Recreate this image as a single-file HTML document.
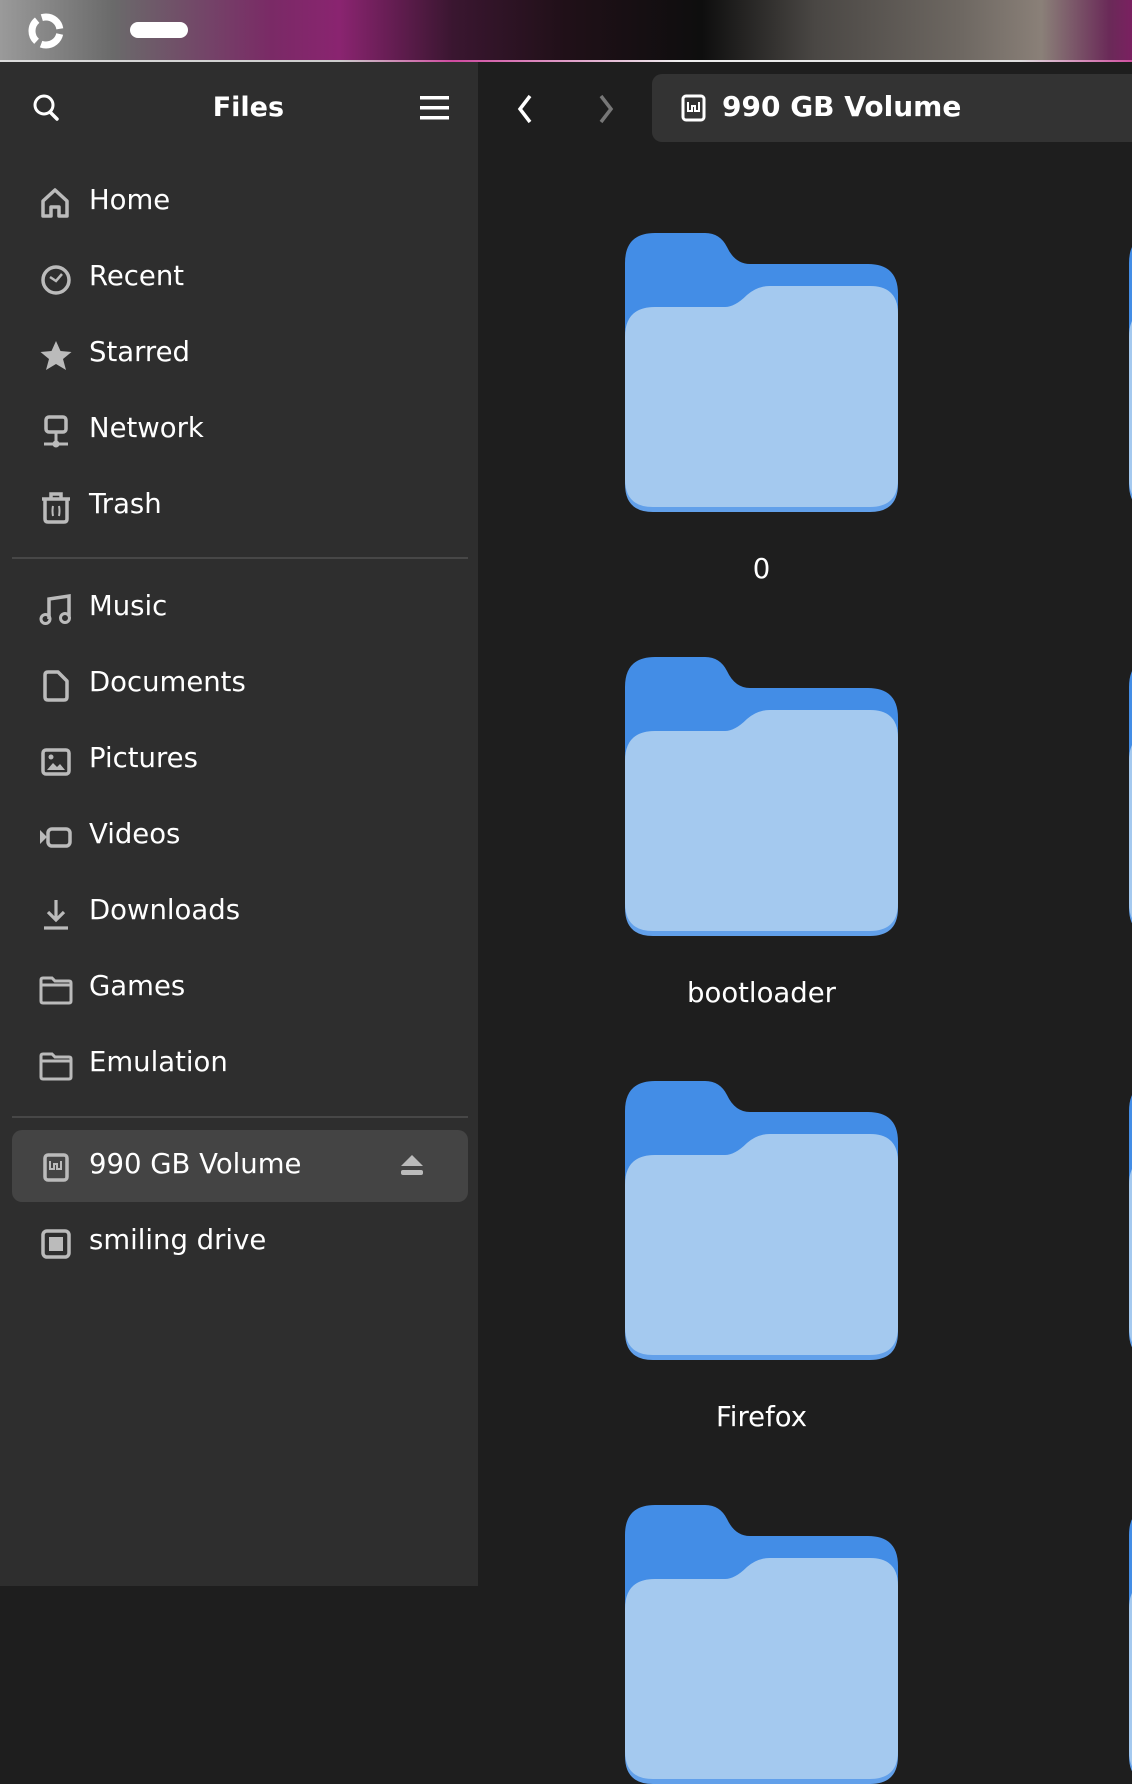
<!DOCTYPE html>
<html><head><meta charset="utf-8"><style>
*{margin:0;padding:0;box-sizing:border-box}
body{width:1132px;height:1586px;overflow:hidden;background:#1e1e1e;font-family:"DejaVu Sans","Liberation Sans",sans-serif;color:#fff;position:relative}
.top{position:absolute;left:0;top:0;width:1132px;height:61px;background:linear-gradient(90deg,#9a9a9a 0%,#6a6a6a 10%,#7a2a66 24%,#8a2470 30%,#3a1630 40%,#201018 50%,#0e0e0e 62%,#4a4744 72%,#6e6862 85%,#8a8078 92%,#6a2a58 98%,#7a2060 100%)}
.topline{position:absolute;left:0;top:60px;width:1132px;height:2px;background:linear-gradient(90deg,#ddd,#ccc 30%,#d04aa0 40%,#eee 60%,#ddd 90%,#d050a0)}
.side{position:absolute;left:0;top:62px;width:478px;height:1524px;background:#2e2e2e}
.item{position:absolute;left:0;width:478px;height:40px;display:flex;align-items:center}
.item svg{position:absolute;left:38px;top:4px}
.item span{position:absolute;left:89px;font-size:27.5px;line-height:40px;top:-2px}
.sep{position:absolute;left:12px;width:456px;height:2px;background:#474747}
.sel{position:absolute;left:12px;top:1130px;width:456px;height:72px;background:#444;border-radius:10px}
.lbl{position:absolute;width:273px;left:625px;text-align:center;font-size:27.5px}
</style></head><body>
<div class="top"></div><div class="topline"></div>
<svg style="position:absolute;left:25px;top:10px" width="42" height="42" viewBox="0 0 42 42"><circle cx="21" cy="21" r="14" fill="none" stroke="#fff" stroke-width="7" stroke-dasharray="24 5.3" stroke-dashoffset="-3"/></svg>
<div style="position:absolute;left:130px;top:22px;width:58px;height:16px;background:#fff;border-radius:8px"></div>
<div class="side"></div>
<svg style="position:absolute;left:30px;top:91px" width="32" height="32" viewBox="0 0 32 32"><circle cx="14" cy="14" r="9" fill="none" stroke="#fff" stroke-width="3"/><path d="M20 21l7 7" stroke="#fff" stroke-width="3.5" stroke-linecap="round"/></svg>
<div style="position:absolute;left:0;width:478px;top:92px;text-align:center;font-weight:bold;font-size:27px;">&nbsp;&nbsp;Files</div>
<svg style="position:absolute;left:420px;top:95px" width="30" height="26" viewBox="0 0 30 26"><rect x="0" y="1" width="29" height="3.5" fill="#fff"/><rect x="0" y="11" width="29" height="3.5" fill="#fff"/><rect x="0" y="21" width="29" height="3.5" fill="#fff"/></svg>
<svg style="position:absolute;left:515px;top:93px" width="20" height="32" viewBox="0 0 20 32"><path d="M15 3L5 16l10 13" fill="none" stroke="#fff" stroke-width="3.5"/></svg>
<svg style="position:absolute;left:596px;top:93px" width="20" height="32" viewBox="0 0 20 32"><path d="M5 3l10 13-10 13" fill="none" stroke="#777" stroke-width="3.5"/></svg>
<div style="position:absolute;left:652px;top:74px;width:490px;height:68px;background:#333;border-radius:10px"></div>
<svg style="position:absolute;left:681px;top:94px" width="26" height="28" viewBox="0 0 26 28"><rect x="2" y="2" width="21" height="24" rx="3" fill="none" stroke="#fff" stroke-width="3"/><path d="M7 8v9h4v-5h3v5h4V8" fill="none" stroke="#fff" stroke-width="2"/></svg>
<div style="position:absolute;left:722px;top:90px;font-size:28px;font-weight:bold">990 GB Volume</div>

<div class="item" style="top:182px"><svg width="36" height="36" viewBox="0 0 36 36"><path d="M5 30V15L17 4l12 11v15H21V21h-8v9z" fill="none" stroke="#bbb" stroke-width="3.5" stroke-linejoin="round"/></svg><span>Home</span></div>
<div class="item" style="top:258px"><svg width="36" height="36" viewBox="0 0 36 36"><circle cx="18" cy="18" r="13" fill="none" stroke="#bbb" stroke-width="3.5"/><path d="M12 15l6 4 6-7" fill="none" stroke="#bbb" stroke-width="2.5"/></svg><span>Recent</span></div>
<div class="item" style="top:334px"><svg width="36" height="36" viewBox="0 0 36 36"><path d="M18 3l4.5 10 11 1-8.5 7 3 11-10-6-10 6 3-11-8.5-7 11-1z" fill="#bbb"/></svg><span>Starred</span></div>
<div class="item" style="top:410px"><svg width="36" height="36" viewBox="0 0 36 36"><rect x="8" y="3" width="20" height="15" rx="3" fill="none" stroke="#bbb" stroke-width="3.5"/><path d="M18 18v10M6 30h24" stroke="#bbb" stroke-width="3"/><circle cx="18" cy="30" r="3.5" fill="#bbb"/></svg><span>Network</span></div>
<div class="item" style="top:486px"><svg width="36" height="36" viewBox="0 0 36 36"><path d="M4 9h28M13 8V4h10v4M7 9v20q0 3 3 3h16q3 0 3-3V9" fill="none" stroke="#bbb" stroke-width="3.5"/><path d="M15 16q-1 5 0 10M21 16q1 5 0 10" fill="none" stroke="#bbb" stroke-width="2"/></svg><span>Trash</span></div>
<div class="sep" style="top:557px"></div>
<div class="item" style="top:588px"><svg width="36" height="36" viewBox="0 0 36 36"><path d="M11 27V7l20-3v20" fill="none" stroke="#bbb" stroke-width="3.5"/><circle cx="7.5" cy="27" r="4.5" fill="none" stroke="#bbb" stroke-width="3"/><circle cx="27" cy="26" r="4.5" fill="none" stroke="#bbb" stroke-width="3"/></svg><span>Music</span></div>
<div class="item" style="top:664px"><svg width="36" height="36" viewBox="0 0 36 36"><path d="M7 7q0-3 3-3h10l9 9v16q0 3-3 3H10q-3 0-3-3z" fill="none" stroke="#bbb" stroke-width="3.5" stroke-linejoin="round"/></svg><span>Documents</span></div>
<div class="item" style="top:740px"><svg width="36" height="36" viewBox="0 0 36 36"><rect x="5" y="6" width="26" height="24" rx="3" fill="none" stroke="#bbb" stroke-width="3.5"/><path d="M9 26l6-7 4 4 3-3 5 6z" fill="#bbb"/><circle cx="13" cy="13" r="2.5" fill="#bbb"/></svg><span>Pictures</span></div>
<div class="item" style="top:816px"><svg width="36" height="36" viewBox="0 0 36 36"><path d="M2 10v14l7-7z" fill="#bbb"/><rect x="10" y="9" width="22" height="17" rx="4" fill="none" stroke="#bbb" stroke-width="3.5"/></svg><span>Videos</span></div>
<div class="item" style="top:892px"><svg width="36" height="36" viewBox="0 0 36 36"><path d="M18 4v20M10 16l8 8 8-8M6 32h24" fill="none" stroke="#bbb" stroke-width="3.2"/></svg><span>Downloads</span></div>
<div class="item" style="top:968px"><svg width="36" height="36" viewBox="0 0 36 36"><path d="M3 8q0-2 2-2h9l3 3h14q2 0 2 2v18q0 2-2 2H5q-2 0-2-2z M3 13h30" fill="none" stroke="#bbb" stroke-width="3"/></svg><span>Games</span></div>
<div class="item" style="top:1044px"><svg width="36" height="36" viewBox="0 0 36 36"><path d="M3 8q0-2 2-2h9l3 3h14q2 0 2 2v18q0 2-2 2H5q-2 0-2-2z M3 13h30" fill="none" stroke="#bbb" stroke-width="3"/></svg><span>Emulation</span></div>
<div class="sep" style="top:1116px"></div>
<div class="sel"></div>
<div class="item" style="top:1146px"><svg width="36" height="36" viewBox="0 0 36 36"><rect x="7" y="5" width="22" height="25" rx="3" fill="none" stroke="#bbb" stroke-width="3.5"/><path d="M12 11v8h4v-5h3v5h4v-8" fill="none" stroke="#bbb" stroke-width="2"/></svg><span>990 GB Volume</span>
<svg style="left:398px;top:6px" width="28" height="28" viewBox="0 0 28 28"><path d="M14 3l11 11H3z" fill="#bbb"/><rect x="3" y="18" width="22" height="5" rx="2" fill="#bbb"/></svg></div>
<div class="item" style="top:1222px"><svg width="36" height="36" viewBox="0 0 36 36"><rect x="5" y="5" width="26" height="26" rx="4" fill="none" stroke="#bbb" stroke-width="3.5"/><rect x="11" y="11" width="14" height="14" fill="#bbb"/></svg><span>smiling drive</span></div>

<svg width="0" height="0" style="position:absolute"><defs><g id="f">
<path d="M0 251V30Q0 0 30 0H80Q95 0 102 14Q110 31 125 31H243Q273 31 273 61V251Z" fill="#438de6"/>
<path d="M0 104Q0 74 30 74H100Q110 74 122 62Q132 53 145 53H245Q273 53 273 81V251Q273 279 245 279H28Q0 279 0 251Z" fill="#62a0ea"/>
<path d="M0 104Q0 74 30 74H100Q110 74 122 62Q132 53 145 53H245Q273 53 273 81V246Q273 274 245 274H28Q0 274 0 246Z" fill="#a4c9ef"/>
</g></defs></svg>
<svg style="position:absolute;left:625px;top:233px" width="273" height="279"><use href="#f"/></svg>
<svg style="position:absolute;left:625px;top:657px" width="273" height="279"><use href="#f"/></svg>
<svg style="position:absolute;left:625px;top:1081px" width="273" height="279"><use href="#f"/></svg>
<svg style="position:absolute;left:625px;top:1505px" width="273" height="279"><use href="#f"/></svg>
<svg style="position:absolute;left:1129px;top:233px" width="10" height="279"><use href="#f"/></svg>
<svg style="position:absolute;left:1129px;top:657px" width="10" height="279"><use href="#f"/></svg>
<svg style="position:absolute;left:1129px;top:1081px" width="10" height="279"><use href="#f"/></svg>
<svg style="position:absolute;left:1129px;top:1505px" width="10" height="279"><use href="#f"/></svg>
<div class="lbl" style="top:553px">0</div>
<div class="lbl" style="top:977px">bootloader</div>
<div class="lbl" style="top:1401px">Firefox</div>
</body></html>
